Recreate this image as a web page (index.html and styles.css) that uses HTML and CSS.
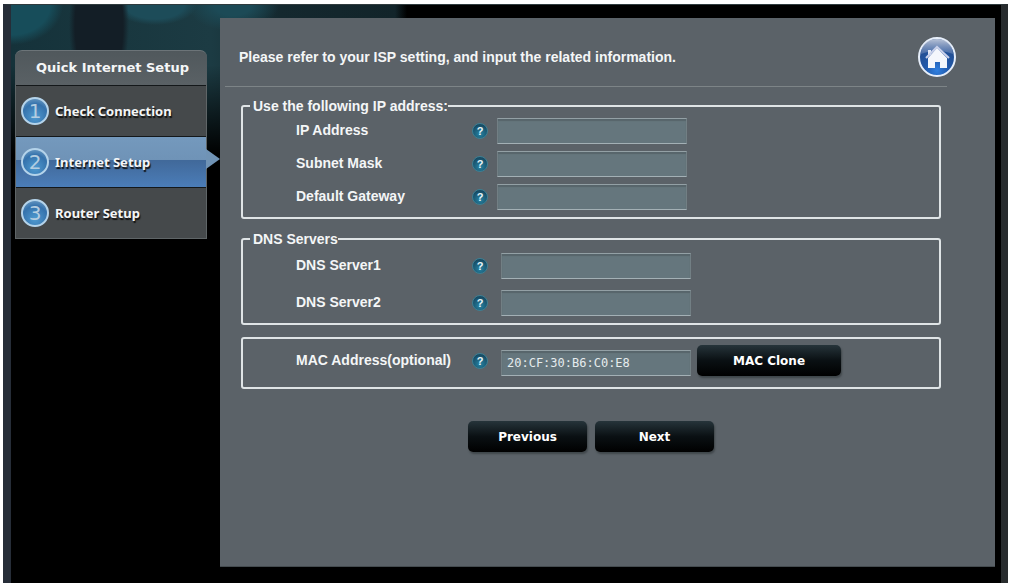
FILE: index.html
```
<!DOCTYPE html>
<html lang="en">
<head>
<meta charset="UTF-8">
<meta name="viewport" content="width=device-width, initial-scale=1.0">
<title>Quick Internet Setup</title>
<link rel="stylesheet" href="styles.css">
</head>
<body>

<div class="frame">

  <nav class="sidebar">
    <h2 class="sidebar-title">Quick Internet Setup</h2>
    <ol class="steps">
      <li><a class="step" href="#check"><span class="num">1</span>Check Connection</a></li>
      <li><a class="step active" href="#internet"><span class="num">2</span>Internet Setup</a></li>
      <li><a class="step" href="#router"><span class="num">3</span>Router Setup</a></li>
    </ol>
  </nav>

  <main class="panel">
    <header class="panel-header">
      <p>Please refer to your ISP setting, and input the related information.</p>
      <a class="home" href="#home" aria-label="Home">
        <svg width="40" height="42" viewBox="0 0 40 42">
          <defs>
            <radialGradient id="ball" cx="50%" cy="85%" r="75%">
              <stop offset="0" stop-color="#2f7fe0"/>
              <stop offset="0.45" stop-color="#2158a8"/>
              <stop offset="1" stop-color="#234a88"/>
            </radialGradient>
            <linearGradient id="shine" x1="0" y1="0" x2="0" y2="1">
              <stop offset="0" stop-color="#d3d9e6" stop-opacity="0.85"/>
              <stop offset="1" stop-color="#8ea3cb" stop-opacity="0.35"/>
            </linearGradient>
          </defs>
          <ellipse cx="20" cy="21" rx="18" ry="19" fill="url(#ball)" stroke="#e6eefa" stroke-width="2"/>
          <path d="M4 18 C4 8 11 3 20 3 C29 3 36 8 36 18 C26 14 14 14 4 18 Z" fill="url(#shine)"/>
          <path d="M11 14 H14 V19 H11 Z" fill="#e3e9f5"/>
          <path d="M20 12 L30 22 V32 H23 V26 H18 V32 H11 V22 Z" fill="#f4f7fc"/>
          <path d="M9 22 L20 11 L32 22" fill="none" stroke="#c9d1ea" stroke-width="2"/>
        </svg>
      </a>
    </header>

    <form class="wan-form">
      <fieldset class="ip-box">
        <legend>Use the following IP address:</legend>
        <div class="row">
          <label for="ip">IP Address</label>
          <button type="button" class="help" aria-label="Help for IP address">?</button>
          <input type="text" id="ip">
        </div>
        <div class="row">
          <label for="mask">Subnet Mask</label>
          <button type="button" class="help" aria-label="Help for subnet mask">?</button>
          <input type="text" id="mask">
        </div>
        <div class="row">
          <label for="gateway">Default Gateway</label>
          <button type="button" class="help" aria-label="Help for default gateway">?</button>
          <input type="text" id="gateway">
        </div>
      </fieldset>

      <fieldset class="dns-box">
        <legend>DNS Servers</legend>
        <div class="row">
          <label for="dns1">DNS Server1</label>
          <button type="button" class="help" aria-label="Help for DNS server 1">?</button>
          <input type="text" id="dns1">
        </div>
        <div class="row">
          <label for="dns2">DNS Server2</label>
          <button type="button" class="help" aria-label="Help for DNS server 2">?</button>
          <input type="text" id="dns2">
        </div>
      </fieldset>

      <fieldset class="mac-box">
        <div class="row">
          <label for="mac">MAC Address(optional)</label>
          <button type="button" class="help" aria-label="Help for MAC address">?</button>
          <input type="text" id="mac" value="20:CF:30:B6:C0:E8">
          <button type="button" class="btn btn-clone">MAC Clone</button>
        </div>
      </fieldset>

      <div class="actions">
        <button type="button" class="btn">Previous</button>
        <button type="submit" class="btn">Next</button>
      </div>
    </form>
  </main>

</div>

</body>
</html>
```
FILE: styles.css
```
* {
    box-sizing: border-box;
}

body {
    margin: 0;
    padding: 4px 8px 5px 3px;
    min-height: 100vh;
    display: flex;
    background: #ffffff;
    font-family: "Liberation Sans", Arial, sans-serif;
    color: #f4f6f7;
}

.frame {
    flex: 1;
    display: flex;
    align-items: stretch;
    padding: 13px 6px 16px 4px;
    border-top: 1px solid #2f3b3e;
    border-left: 8px solid #262d38;
    border-right: 7px solid #282c2e;
    background:
        linear-gradient(to bottom, transparent 60px, #000000 150px) 0 0 / 210px 160px no-repeat,
        radial-gradient(ellipse 30px 80px at 88px 20px, #131e26 80%, transparent 100%) no-repeat,
        radial-gradient(ellipse 52px 40px at 0 0, #174d5a 75%, transparent 100%) no-repeat,
        radial-gradient(ellipse 42px 20px at 144px 0, #1d4c59 70%, transparent 100%) no-repeat,
        radial-gradient(ellipse 46px 26px at 222px 0, #1c4a56 40%, transparent 100%) no-repeat,
        linear-gradient(to right, #15323a 0, #1c3b43 200px, #14282e 270px, #12242a 384px, #000000 396px) 0 0 / 100% 150px no-repeat,
        #000000;
}

/* Step menu */
.sidebar {
    width: 192px;
    margin: 32px 13px 0 0;
    flex: none;
}

.sidebar-title {
    margin: 0;
    height: 35px;
    line-height: 34px;
    padding-left: 21px;
    font-size: 13px;
    font-family: "DejaVu Sans", Verdana, sans-serif;
    white-space: nowrap;
    background: linear-gradient(to bottom, #50585c, #5a6165);
    border-top: 1px solid #6c7478;
    border-radius: 7px 7px 0 0;
}

.steps {
    list-style: none;
    margin: 0;
    padding: 0;
    border: 1px solid #5f6567;
    border-top: none;
}

.step {
    display: flex;
    align-items: center;
    gap: 6px;
    height: 51px;
    padding-left: 5px;
    border-top: 1px solid #14181a;
    background: #45494b;
    color: #f4f6f7;
    font-size: 13px;
    font-weight: bold;
    font-family: "Noto Sans", Verdana, sans-serif;
    text-decoration: none;
    text-shadow: 1px 2px 1px #111111;
    white-space: nowrap;
}

.step.active {
    position: relative;
    background: linear-gradient(to bottom, #7499bd 0, #6f93b7 46%, #41699a 47%, #4b7db8 100%);
}

.step.active::after {
    content: "";
    position: absolute;
    left: 100%;
    top: 12px;
    border: 10px solid transparent;
    border-left: 14px solid #7093b5;
    border-right: none;
}

.num {
    width: 28px;
    height: 28px;
    border: 2px solid #b4d3ea;
    border-radius: 50%;
    background: radial-gradient(circle at 50% 75%, #4f9ad0, #3572ac 60%, #7fa9cb 100%);
    color: #b4cde0;
    font: 20px/24px "DejaVu Sans", Verdana, sans-serif;
    text-align: center;
    text-shadow: none;
}

/* Main panel */
.panel {
    flex: 1;
    padding: 0 38px 0 5px;
    background: #5b6268;
    border-bottom: 1px solid #444b4f;
}

.panel-header {
    display: flex;
    align-items: center;
    justify-content: space-between;
    height: 69px;
    padding: 8px 0 0 14px;
    background: linear-gradient(#7d8487, #7d8487) 0 100% / calc(100% - 10px) 1px no-repeat;
}

.panel-header p {
    margin: 0;
    font-size: 14px;
    font-weight: bold;
}

.home svg {
    display: block;
}

.wan-form {
    display: flex;
    flex-direction: column;
    gap: 12px;
    margin: 11px 16px 0 16px;
    font-size: 14px;
    font-weight: bold;
}

fieldset {
    margin: 0;
    padding: 4px 8px 7px 53px;
    border: 2px solid #dfe4e6;
    border-radius: 3px;
}

legend {
    margin-left: -46px;
    padding: 0 0 0 3px;
    line-height: 16px;
}

.row {
    display: flex;
    align-items: center;
}

.row + .row {
    margin-top: 7px;
}

.row label {
    width: 176px;
    line-height: 16px;
    padding-bottom: 2px;
}

.help {
    width: 16px;
    height: 16px;
    margin-right: 9px;
    padding: 0;
    border: 1px solid #3c7f93;
    border-radius: 50%;
    background: radial-gradient(circle at 50% 70%, #2683a3, #174a63 75%);
    color: #e8f4f8;
    font: bold 11px/12px "Liberation Sans", Arial, sans-serif;
    cursor: pointer;
}

input[type="text"] {
    width: 190px;
    height: 26px;
    padding: 0 5px;
    border: 1px solid #727f84;
    border-top-color: #93a0a5;
    border-bottom-color: #a3b0b5;
    background: #65767d;
    box-shadow: inset 0 2px 1px #57656b;
    color: #e6ecee;
    font: 12px "DejaVu Sans Mono", "Lucida Console", monospace;
}

.dns-box {
    padding-top: 6px;
}

.dns-box .row + .row {
    margin-top: 11px;
}

.dns-box .help,
.mac-box .help {
    margin-right: 13px;
}

.mac-box {
    padding-top: 6px;
    padding-bottom: 11px;
}

.mac-box input {
    align-self: flex-end;
}

.btn {
    width: 119px;
    height: 31px;
    padding: 0;
    border: none;
    border-radius: 5px;
    background: linear-gradient(to bottom, #26343a, #0a1013 50%, #000000);
    box-shadow: 1px 2px 2px #3f464a;
    color: #ffffff;
    font: bold 12px "DejaVu Sans", Verdana, sans-serif;
    cursor: pointer;
}

.btn-clone {
    width: 144px;
    margin-left: 6px;
}

.actions {
    display: flex;
    justify-content: center;
    gap: 8px;
    margin-top: 20px;
}
```
